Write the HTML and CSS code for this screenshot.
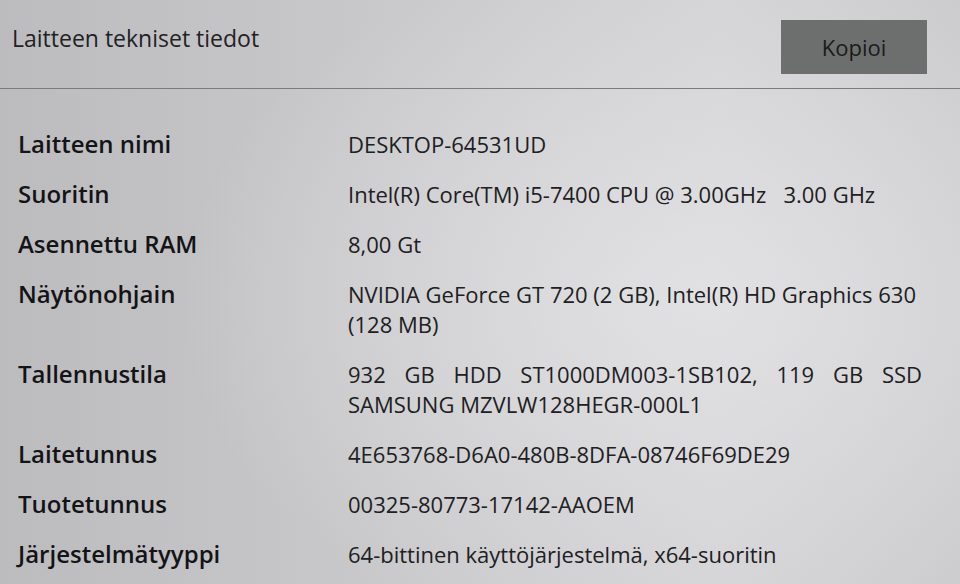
FILE: index.html
```html
<!DOCTYPE html>
<html lang="fi">
<head>
<meta charset="utf-8">
<title>Laitteen tekniset tiedot</title>
<link rel="stylesheet" href="styles.css">
</head>
<body>
<div class="screen">
  <header class="head">
    <h1 class="title">Laitteen tekniset tiedot</h1>
    <button class="copy">Kopioi</button>
  </header>
  <div class="divider"></div>
  <dl class="specs">
    <div class="row"><dt>Laitteen nimi</dt><dd>DESKTOP-64531UD</dd></div>
    <div class="row"><dt>Suoritin</dt><dd>Intel(R) Core(TM) i5-7400 CPU @ 3.00GHz&nbsp;&nbsp; 3.00 GHz</dd></div>
    <div class="row"><dt>Asennettu RAM</dt><dd>8,00 Gt</dd></div>
    <div class="row"><dt>Näytönohjain</dt><dd>NVIDIA GeForce GT 720 (2 GB), Intel(R) HD Graphics 630 (128 MB)</dd></div>
    <div class="row"><dt>Tallennustila</dt><dd class="just">932 GB HDD ST1000DM003-1SB102, 119 GB SSD SAMSUNG MZVLW128HEGR-000L1</dd></div>
    <div class="row"><dt>Laitetunnus</dt><dd>4E653768-D6A0-480B-8DFA-08746F69DE29</dd></div>
    <div class="row"><dt>Tuotetunnus</dt><dd>00325-80773-17142-AAOEM</dd></div>
    <div class="row"><dt>Järjestelmätyyppi</dt><dd>64-bittinen käyttöjärjestelmä, x64-suoritin</dd></div>
  </dl>
</div>
</body>
</html>
```
FILE: styles.css
```css
* { box-sizing: border-box; }
html, body { margin: 0; padding: 0; }
body {
  width: 960px;
  height: 584px;
  overflow: hidden;
  font-family: "Open Sans", "Noto Sans", sans-serif;
  color: #1d1d1f;
}
.screen {
  width: 960px;
  height: 584px;
  background:
    radial-gradient(ellipse 520px 360px at 700px 300px, rgba(230,230,232,0.75), rgba(230,230,232,0) 100%),
    linear-gradient(90deg, #bcbcbf 0%, #c9c9cb 40%, #d3d3d5 75%, #cbcbcd 100%);
  display: flex;
  flex-direction: column;
}
.head {
  display: flex;
  justify-content: space-between;
  align-items: flex-start;
  padding: 20px 33px 0 12px;
  height: 88px;
}
.title {
  margin: 2px 0 0;
  font-size: 23px;
  font-weight: 400;
  color: #222224;
  letter-spacing: 0;
}
.copy {
  width: 146px;
  height: 54px;
  border: none;
  background: #6d6f6f;
  color: #1a1a1a;
  font-family: "Open Sans", "Noto Sans", sans-serif;
  font-size: 22px;
  padding: 0;
}
.divider {
  height: 1px;
  background: #7a7b7d;
}
.specs {
  margin: 0;
  padding: 40px 0 0 18px;
  display: flex;
  flex-direction: column;
  gap: 20px;
}
.row {
  display: grid;
  grid-template-columns: 330px 574px;
  align-items: start;
}
dt {
  font-size: 24px;
  font-weight: 600;
  line-height: 30px;
  color: #141416;
}
dd {
  margin: 0;
  font-size: 22px;
  line-height: 30px;
  color: #202022;
}
.just {
  text-align: justify;
}
```
